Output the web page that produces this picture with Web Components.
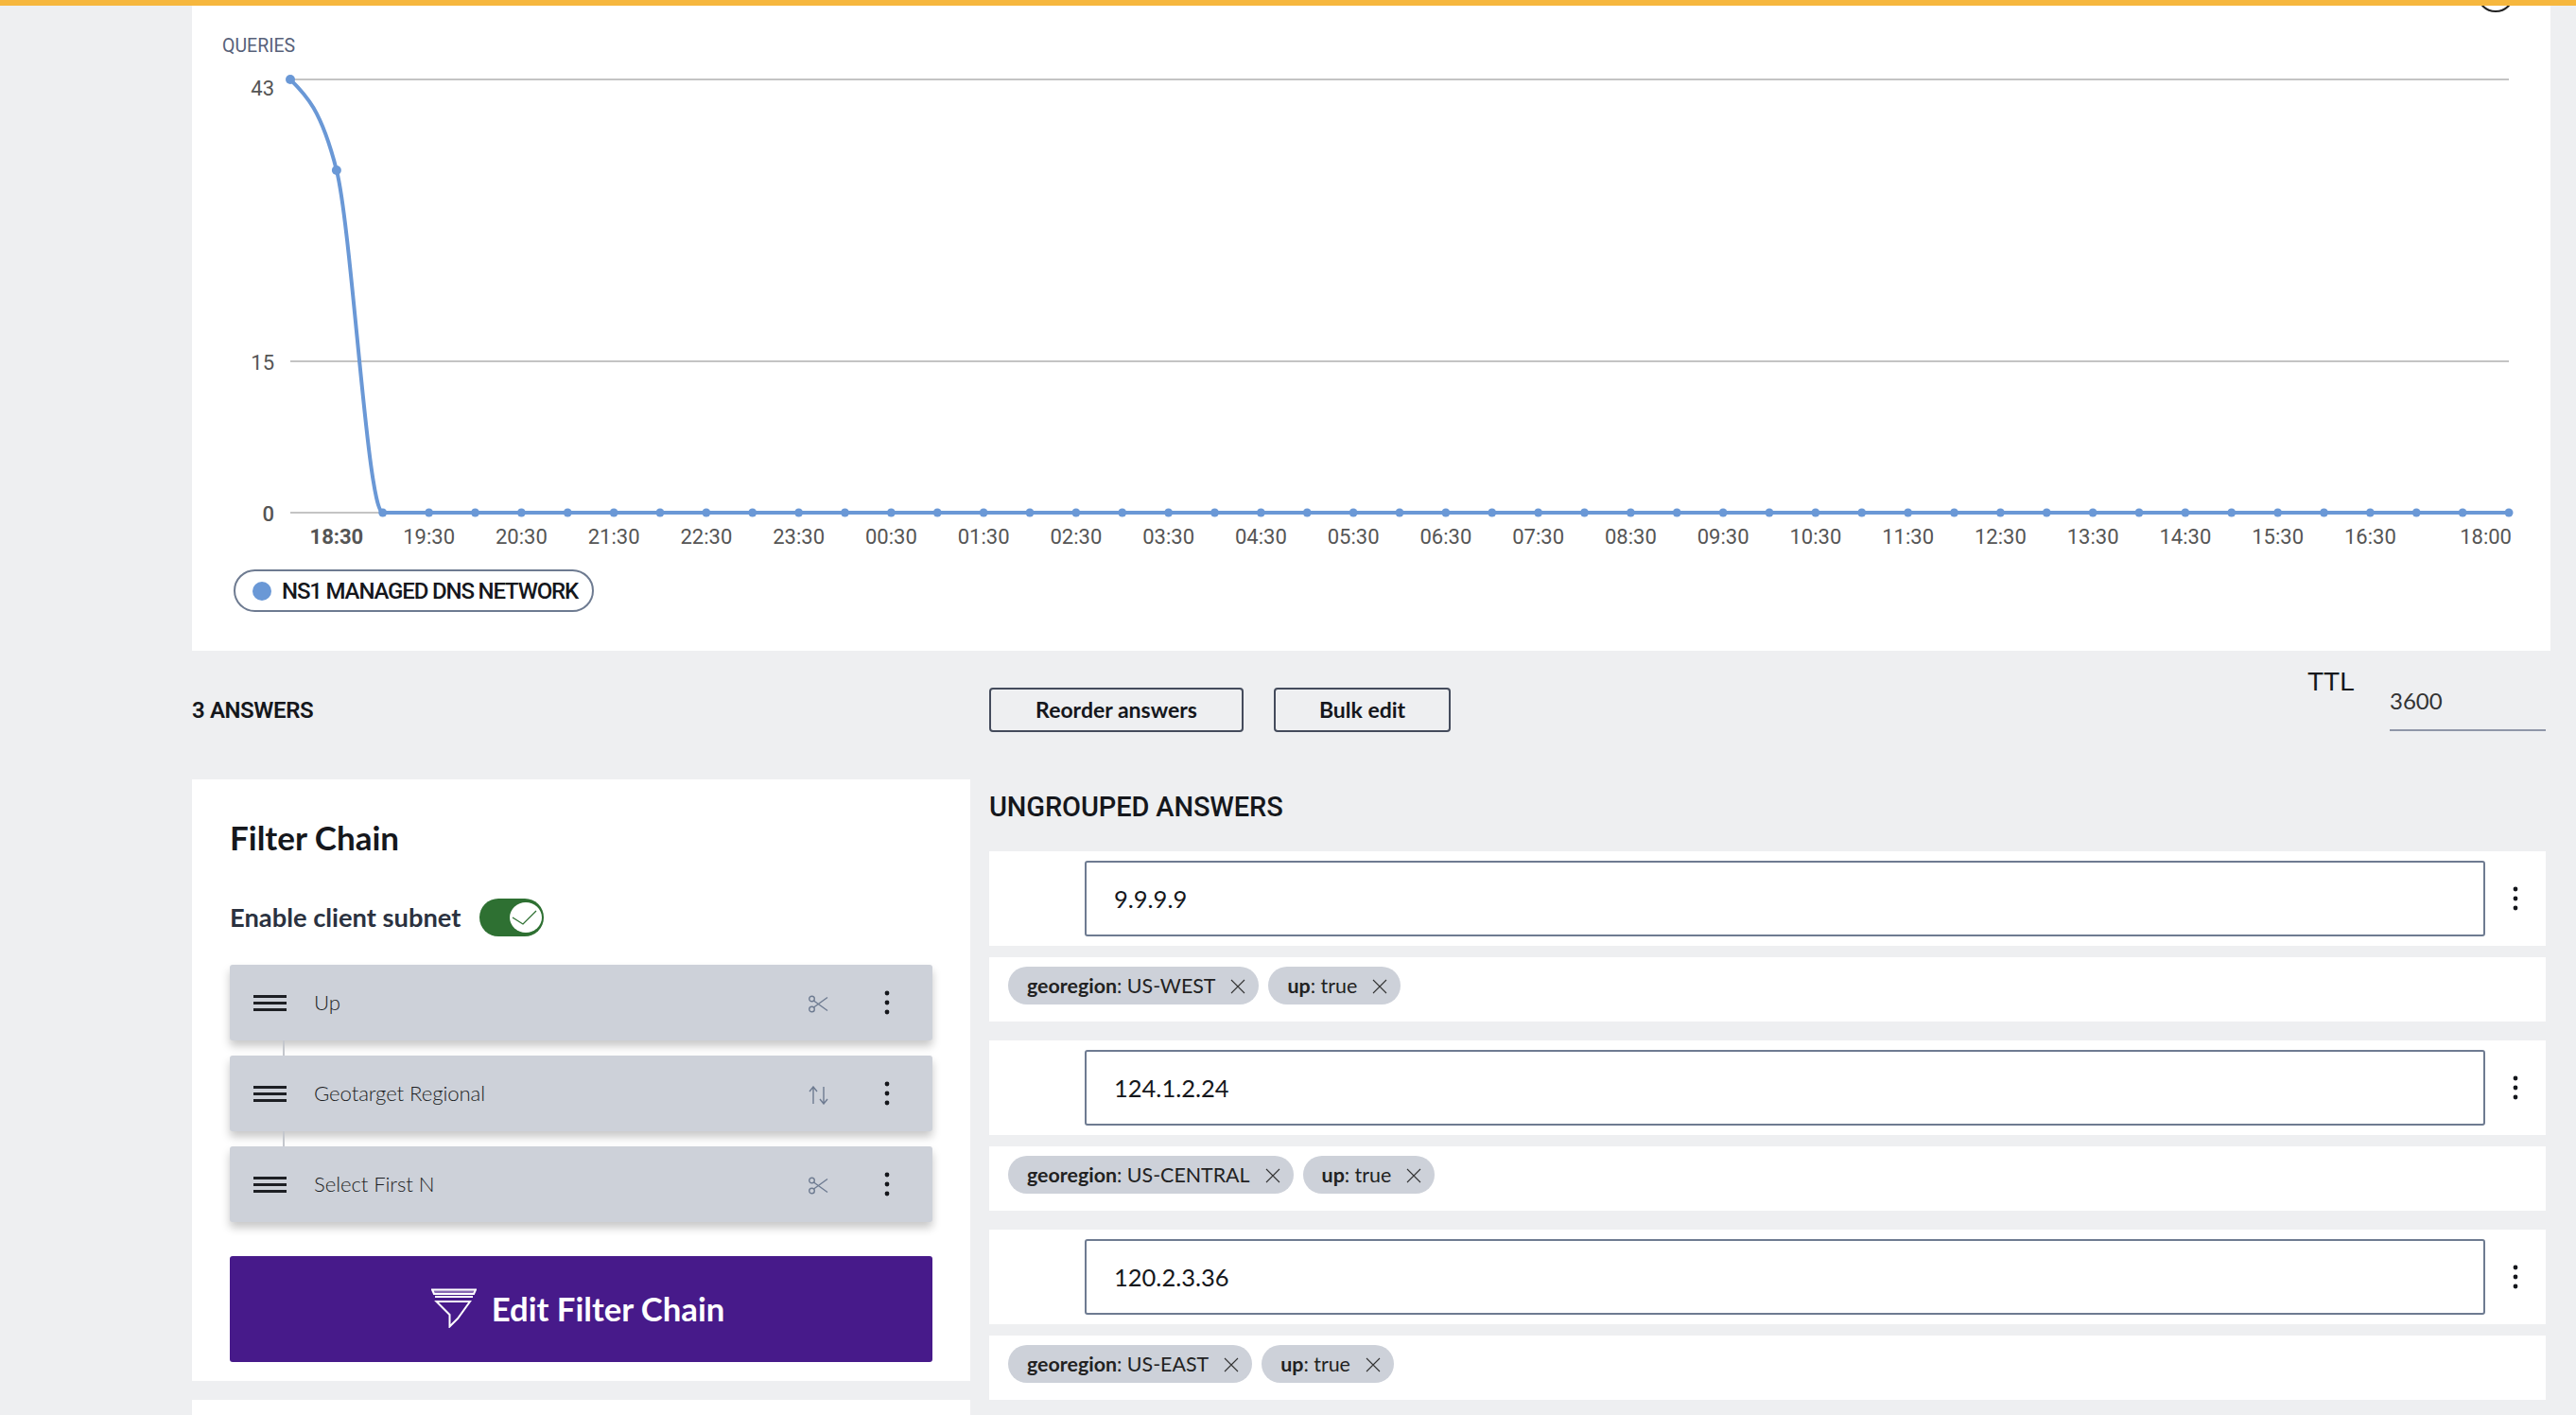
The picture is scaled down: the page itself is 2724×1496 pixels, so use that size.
<!DOCTYPE html>
<html>
<head>
<meta charset="utf-8">
<style>
  html, body { margin: 0; height: 1496px; overflow: hidden; background: #eeeff1; }
  body { font-family: Lato, "Noto Sans", sans-serif; color: #15171c; }
  .layout { display: grid; grid-template-columns: 823px 1646px; column-gap: 20px; align-items: start; margin-left: 203px; }
  .left { display: flex; flex-direction: column; gap: 20px; }
  .right { display: flex; flex-direction: column; }
</style>
</head>
<body>
<top-stripe></top-stripe>
<main style="display:block;margin-left:203px;width:2494px">
  <queries-chart></queries-chart>
</main>
<answers-bar></answers-bar>
<div class="layout">
  <div class="left">
    <filter-panel>
      <filter-row label="Up" icon="scissors"></filter-row>
      <filter-row label="Geotarget Regional" icon="swap" linked></filter-row>
      <filter-row label="Select First N" icon="scissors" linked></filter-row>
    </filter-panel>
    <blank-panel></blank-panel>
  </div>
  <div class="right">
    <answers-heading>UNGROUPED ANSWERS</answers-heading>
    <answer-group ip="9.9.9.9">
      <meta-tag key="georegion" value="US-WEST"></meta-tag>
      <meta-tag key="up" value="true"></meta-tag>
    </answer-group>
    <answer-group ip="124.1.2.24">
      <meta-tag key="georegion" value="US-CENTRAL"></meta-tag>
      <meta-tag key="up" value="true"></meta-tag>
    </answer-group>
    <answer-group ip="120.2.3.36">
      <meta-tag key="georegion" value="US-EAST"></meta-tag>
      <meta-tag key="up" value="true"></meta-tag>
    </answer-group>
  </div>
</div>

<script>
const DOTS = `<svg width="6" height="26" viewBox="0 0 6 26"><circle cx="3" cy="3" r="2.4" fill="#15171c"/><circle cx="3" cy="13" r="2.4" fill="#15171c"/><circle cx="3" cy="23" r="2.4" fill="#15171c"/></svg>`;

class TopStripe extends HTMLElement {
  constructor() {
    super();
    this.attachShadow({ mode: 'open' });
    this.shadowRoot.innerHTML = `<style>:host { display: block; height: 6px; background: #f6b73e; position: relative; z-index: 2; }</style>`;
  }
}
customElements.define('top-stripe', TopStripe);

class QueriesChart extends HTMLElement {
  constructor() {
    super();
    this.attachShadow({ mode: 'open' });
  }

  connectedCallback() {
    const x0 = 307, step = 48.875, y0 = 542;
    const labels = ['18:30','19:30','20:30','21:30','22:30','23:30','00:30','01:30','02:30','03:30','04:30','05:30','06:30','07:30','08:30','09:30','10:30','11:30','12:30','13:30','14:30','15:30','16:30'];
    let dots = '';
    for (let i = 0; i <= 48; i++) {
      const y = i === 0 ? 84 : i === 1 ? 180 : y0;
      const r = i < 2 ? 5 : 4.5;
      dots += `<circle cx="${x0 + i * step}" cy="${y}" r="${r}" fill="#6a98d6"/>`;
    }
    const xText = labels.map((t, i) =>
      `<text x="${x0 + (2 * i + 1) * step}" y="575" text-anchor="middle" style="font-weight:${i === 0 ? 700 : 400}">${t}</text>`
    ).join('');

    this.shadowRoot.innerHTML = `
      <style>
        :host { display: block; background: #fff; height: 682px; overflow: hidden; }
        svg { display: block; }
        text { font: 400 22px Roboto, sans-serif; fill: #555; }
        .legend {
          display: inline-flex; align-items: center; gap: 11px; box-sizing: border-box;
          height: 45px; margin: 6px 0 0 44px; padding: 0 15px 0 18px;
          border: 2px solid #6e7b91; border-radius: 23px;
          font: 500 24px Roboto, sans-serif; letter-spacing: -1.15px; color: #15171c; white-space: nowrap;
        }
        .legend i { width: 20px; height: 20px; border-radius: 50%; background: #6a98d6; }
      </style>
      <svg width="2494" height="590" viewBox="203 6 2494 590">
        <text x="235" y="55" style="font-size:19.5px;fill:#58627a">QUERIES</text>
        <circle cx="2639" cy="-7" r="19" fill="none" stroke="#222" stroke-width="2"/>
        <path d="M307 84H2653M307 382H2653M307 542H2653" stroke="#c4c4c4" stroke-width="2" fill="none"/>
        <text x="290" y="101" text-anchor="end">43</text>
        <text x="290" y="391" text-anchor="end">15</text>
        <text x="290" y="551" text-anchor="end" style="font-weight:500">0</text>
        <path d="M307 84C323.3 100 339.7 116 355.9 180C372.2 244 388.6 542 404.8 542H2653" fill="none" stroke="#6a98d6" stroke-width="4"/>
        ${dots}
        ${xText}
        <text x="2656" y="575" text-anchor="end">18:00</text>
      </svg>
      <div class="legend"><i></i>NS1 MANAGED DNS NETWORK</div>
    `;
  }
}
customElements.define('queries-chart', QueriesChart);

class AnswersBar extends HTMLElement {
  constructor() {
    super();
    this.attachShadow({ mode: 'open' });
    this.shadowRoot.innerHTML = `
      <style>
        :host {
          display: grid; grid-template-columns: 843px 1fr 252px; box-sizing: border-box;
          height: 136px; margin-left: 203px; width: 2489px;
        }
        .count { font: 600 24px Roboto, sans-serif; letter-spacing: -.4px; align-self: center; padding-bottom: 10px; }
        .btns { display: flex; gap: 32px; padding-top: 39px; align-items: flex-start; }
        button {
          box-sizing: border-box; height: 47px; background: transparent; border: 2px solid #444b5c; border-radius: 4px;
          font: 700 23px/40px Lato, sans-serif; color: #15171c; padding: 0 0 2px;
        }
        .reorder { width: 269px; }
        .bulk { width: 187px; }
        .ttl { display: flex; }
        .ttl b { font: 400 28px "Liberation Sans", sans-serif; width: 87px; padding-top: 17px; }
        .ttl div {
          box-sizing: border-box; width: 165px; height: 85px; padding-top: 38px;
          border-bottom: 2px solid #8f96a8; font: 400 24px Lato, sans-serif; color: #333;
        }
      </style>
      <div class="count">3 ANSWERS</div>
      <div class="btns"><button class="reorder">Reorder answers</button><button class="bulk">Bulk edit</button></div>
      <div class="ttl"><b>TTL</b><div>3600</div></div>
    `;
  }
}
customElements.define('answers-bar', AnswersBar);

class FilterPanel extends HTMLElement {
  constructor() {
    super();
    this.attachShadow({ mode: 'open' });
    this.shadowRoot.innerHTML = `
      <style>
        :host { display: block; background: #fff; height: 636px; box-sizing: border-box; padding: 38px 40px 20px 40px; }
        h2 { margin: 0; font: 700 35px/46px Lato, sans-serif; height: 46px; }
        .subnet { display: flex; align-items: center; gap: 20px; margin-top: 42px; height: 40px; font: 700 27.3px/38px Lato, sans-serif; color: #2b3240; }
        .toggle { box-sizing: border-box; width: 68px; height: 40px; border-radius: 20px; background: #2e7032; display: flex; justify-content: flex-end; align-items: center; padding-right: 2px; }
        .toggle span { width: 34px; height: 32px; border-radius: 50%; background: #fff; display: flex; }
        .rows { display: flex; flex-direction: column; gap: 16px; margin-top: 30px; }
        .edit {
          display: flex; align-items: center; justify-content: center; gap: 16px; box-sizing: border-box; height: 112px; margin-top: 36px; padding: 0 7px 2px 0;
          background: #471a8a; color: #fff; border-radius: 3px; font: 700 34.7px Lato, sans-serif;
        }
      </style>
      <h2>Filter Chain</h2>
      <div class="subnet">Enable client subnet
        <div class="toggle"><span><svg width="34" height="32" viewBox="0 0 34 32"><path d="M3 16L14 23L28 9" fill="none" stroke="#2e7032" stroke-width="1.3"/></svg></span></div>
      </div>
      <div class="rows"><slot></slot></div>
      <div class="edit">
        <svg width="48" height="42" viewBox="0 0 48 42" fill="none" stroke="#fff" stroke-width="2">
          <path d="M1 1.5H47L45 6H3Z" fill="#fff" fill-opacity=".35"/><path d="M4 9H44"/>
          <path d="M5.5 14H41L28 32L19.5 40.5V28Z"/>
        </svg>
        Edit Filter Chain
      </div>
    `;
  }
}
customElements.define('filter-panel', FilterPanel);

class FilterRow extends HTMLElement {
  constructor() {
    super();
    this.attachShadow({ mode: 'open' });
  }

  connectedCallback() {
    const icons = {
      scissors: `<circle cx="3.5" cy="4" r="2.8"/><circle cx="3.5" cy="15" r="2.8"/><path d="M5.5 6L20 16.5M5.5 13L20 2.5"/>`,
      swap: `<path d="M5 19V1M1 6L5 1L9 6M16 1V19M12 14L16 19L20 14"/>`
    };
    this.shadowRoot.innerHTML = `
      <style>
        :host {
          display: flex; align-items: center; position: relative; box-sizing: border-box; height: 80px;
          padding-left: 25px; background: #cdd1d9; border-radius: 3px;
          box-shadow: 0 6px 10px rgba(0,0,0,.22); font: 300 22.2px Lato, sans-serif; letter-spacing: -.1px; color: #1d1f24;
        }
        .burger { width: 35px; height: 17px; flex: none; border-top: 3px solid #1d1f24; border-bottom: 3px solid #1d1f24; box-sizing: border-box; position: relative; }
        .burger::after { content: ""; position: absolute; left: 0; right: 0; top: 4px; height: 3px; background: #1d1f24; }
        .label { flex: 1; margin-left: 29px; margin-top: -2px; }
        .ico { margin-right: 59px; margin-top: 4px; display: flex; }
        .more { margin-right: 45px; margin-top: -1px; display: flex; }
        .link { position: absolute; left: 56px; top: -16px; width: 2px; height: 16px; background: #c4c7cd; }
      </style>
      ${this.hasAttribute('linked') ? '<div class="link"></div>' : ''}
      <div class="burger"></div>
      <div class="label">${this.getAttribute('label')}</div>
      <div class="ico"><svg width="21" height="20" viewBox="0 0 21 20" fill="none" stroke="#6e7b91" stroke-width="1.4">${icons[this.getAttribute('icon')]}</svg></div>
      <div class="more">${DOTS}</div>
    `;
  }
}
customElements.define('filter-row', FilterRow);

class BlankPanel extends HTMLElement {
  constructor() {
    super();
    this.attachShadow({ mode: 'open' });
    this.shadowRoot.innerHTML = `<style>:host { display: block; height: 16px; background: #fff; }</style>`;
  }
}
customElements.define('blank-panel', BlankPanel);

class AnswersHeading extends HTMLElement {
  constructor() {
    super();
    this.attachShadow({ mode: 'open' });
    this.shadowRoot.innerHTML = `
      <style>:host { display: block; height: 76px; padding-top: 12px; box-sizing: border-box; font: 500 29px/34px Roboto, sans-serif; letter-spacing: -.12px; }</style>
      <slot></slot>
    `;
  }
}
customElements.define('answers-heading', AnswersHeading);

class AnswerGroup extends HTMLElement {
  constructor() {
    super();
    this.attachShadow({ mode: 'open' });
  }

  connectedCallback() {
    this.shadowRoot.innerHTML = `
      <style>
        :host { display: block; height: 200px; }
        .ip { display: flex; align-items: center; height: 100px; box-sizing: border-box; padding: 0 29px 0 101px; background: #fff; }
        .field {
          flex: 1; box-sizing: border-box; height: 80px; padding-left: 29px; display: flex; align-items: center;
          border: 2px solid #6e7b91; border-radius: 3px; font: 400 25.5px Lato, sans-serif;
        }
        .more { margin-left: 29px; display: flex; }
        .tags { display: flex; align-items: flex-start; gap: 10px; box-sizing: border-box; height: 68px; margin-top: 12px; padding: 10px 0 0 20px; background: #fff; }
      </style>
      <div class="ip"><div class="field">${this.getAttribute('ip')}</div><div class="more">${DOTS}</div></div>
      <div class="tags"><slot></slot></div>
    `;
  }
}
customElements.define('answer-group', AnswerGroup);

class MetaTag extends HTMLElement {
  constructor() {
    super();
    this.attachShadow({ mode: 'open' });
  }

  connectedCallback() {
    this.shadowRoot.innerHTML = `
      <style>
        :host {
          display: inline-flex; align-items: center; box-sizing: border-box; height: 40px; padding: 0 14px 0 20px;
          background: #cdd1d9; border-radius: 20px; font: 400 21.4px Lato, sans-serif; color: #222; white-space: nowrap;
        }
        b { font-weight: 700; }
        svg { margin-left: 16px; margin-top: 2px; }
      </style>
      <span><b>${this.getAttribute('key')}</b>: ${this.getAttribute('value')}</span>
      <svg width="16" height="16" viewBox="0 0 16 16" fill="none" stroke="#333" stroke-width="1.1"><path d="M1 1L15 15M15 1L1 15"/></svg>
    `;
  }
}
customElements.define('meta-tag', MetaTag);
</script>
</body>
</html>
